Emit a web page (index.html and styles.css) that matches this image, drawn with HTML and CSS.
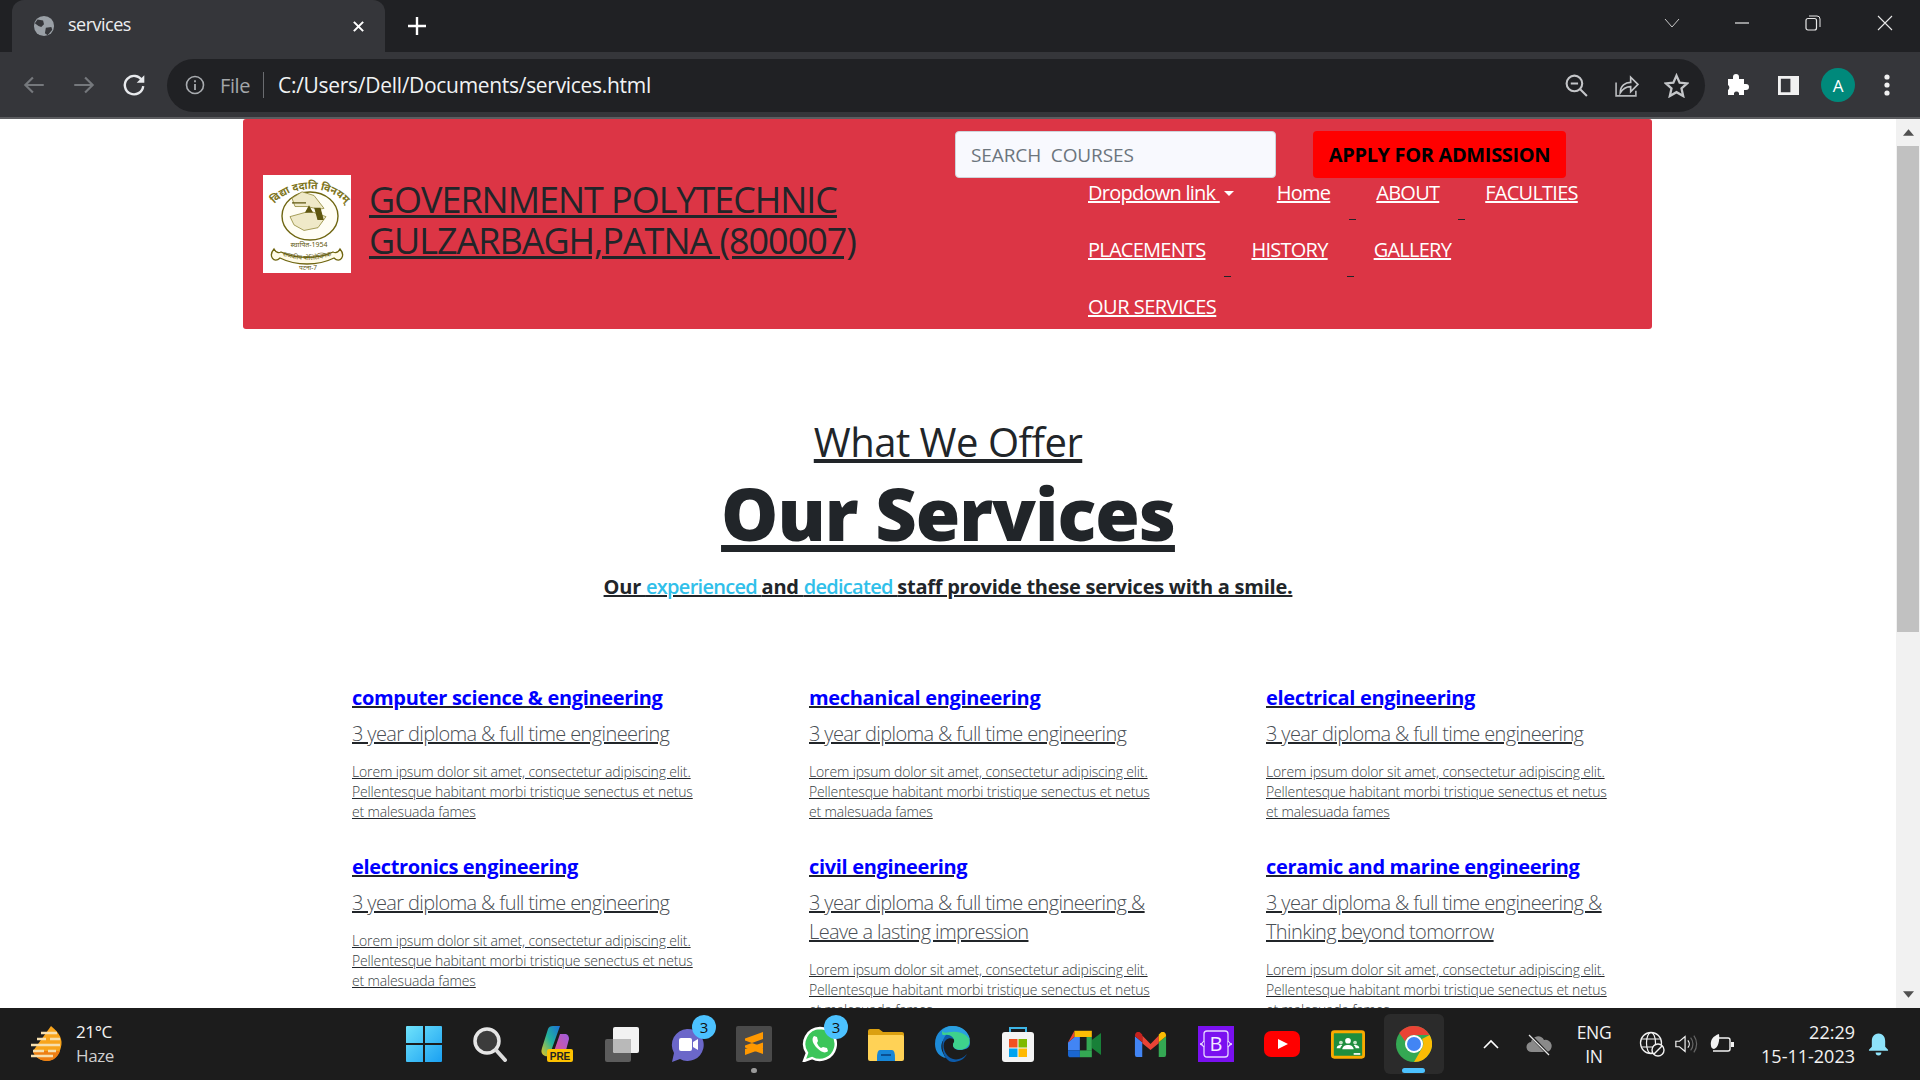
FILE: index.html
```html
<!DOCTYPE html>
<html lang="en">
<head>
<meta charset="utf-8">
<title>services</title>
<link rel="stylesheet" href="styles.css">
</head>
<body>
<div class="tabstrip">
  <div class="tab">
    <svg class="favicon" viewBox="0 0 24 24"><circle cx="12" cy="12" r="11" fill="#9aa0a6"/><path d="M5 5l6 1 1 4-3 3-3-1-4-3zM14 14l6-1 1 3-5 6-3-2z" fill="#35363a"/></svg>
    <span class="tab-title">services</span>
    <svg class="tab-x" viewBox="0 0 14 14"><path d="M2 2l10 10M12 2L2 12" stroke="#fff" stroke-width="2.2"/></svg>
  </div>
  <svg class="plus" viewBox="0 0 20 20"><path d="M10 1v18M1 10h18" stroke="#fff" stroke-width="2.4"/></svg>
  <div class="win-controls">
    <svg viewBox="0 0 16 16" class="wc wc-chev"><path d="M1 4l7 8 7-8" fill="none" stroke="#c8c8c8" stroke-width="1"/></svg>
    <svg viewBox="0 0 16 16" class="wc wc-min"><path d="M1 8h14" stroke="#e8e8e8" stroke-width="1.2"/></svg>
    <svg viewBox="0 0 16 16" class="wc wc-max"><rect x="1" y="3.5" width="10.5" height="11.5" rx="2" fill="none" stroke="#e8e8e8" stroke-width="1.2"/><path d="M4 1h8a3 3 0 0 1 3 3v8" fill="none" stroke="#e8e8e8" stroke-width="1"/></svg>
    <svg viewBox="0 0 16 16" class="wc wc-close"><path d="M1 1l14 14M15 1L1 15" stroke="#e8e8e8" stroke-width="1.1"/></svg>
  </div>
</div>
<div class="toolbar">
  <svg class="nav-ic nav-back" viewBox="0 0 24 24"><path d="M21 12H4M11 5l-7 7 7 7" fill="none" stroke="#75787c" stroke-width="2"/></svg>
  <svg class="nav-ic nav-fwd" viewBox="0 0 24 24"><path d="M3 12h17M13 5l7 7-7 7" fill="none" stroke="#75787c" stroke-width="2"/></svg>
  <svg class="nav-ic nav-rel" viewBox="0 0 24 24"><path d="M19.5 8A8.5 8.5 0 1 0 20.5 13" fill="none" stroke="#e8eaed" stroke-width="2.2"/><path d="M21.5 3v7h-7z" fill="#e8eaed"/></svg>
  <div class="omnibox">
    <svg class="info" viewBox="0 0 20 20"><circle cx="10" cy="10" r="8.5" fill="none" stroke="#a9acb0" stroke-width="1.6"/><path d="M10 9v6M10 5.2v2" stroke="#a9acb0" stroke-width="1.8"/></svg>
    <span class="file">File</span>
    <span class="sep"></span>
    <span class="url">C:/Users/Dell/Documents/services.html</span>
    <span class="omni-space"></span>
    <svg class="omni-ic" viewBox="0 0 24 24"><circle cx="10" cy="10" r="7.5" fill="none" stroke="#c4c6c9" stroke-width="2"/><path d="M6.5 10h7M15.5 15.5l6.5 6.5" stroke="#c4c6c9" stroke-width="2"/></svg>
    <svg class="omni-ic" viewBox="0 0 24 24"><path d="M2 9v13h19v-5" fill="none" stroke="#b4b6b9" stroke-width="1.6"/><path d="M6 19c0-7 5-10 10-10V4l7 7-7 7v-5c-4 0-7 1-10 6z" fill="none" stroke="#c4c6c9" stroke-width="1.6"/></svg>
    <svg class="omni-ic omni-star" viewBox="0 0 24 24"><path d="M12 2.5l3 6.8 7.2.7-5.4 4.9 1.6 7.2L12 18.4l-6.4 3.7 1.6-7.2L1.800 10l7.200-.7z" fill="none" stroke="#c4c6c9" stroke-width="2.200"/></svg>
  </div>
  <svg class="puzzle" viewBox="0 0 24 24"><path d="M3 7h5V5a3 3 0 0 1 6 0v2h5v5h2a3 3 0 0 1 0 6h-2v5h-5v-2a3 3 0 0 0-5 0v2H3v-5a3 3 0 0 0 0-5z" fill="#fff" transform="translate(0 -1) scale(.96)"/></svg>
  <svg class="sidepanel" viewBox="0 0 22 22"><path d="M0 1h22v20H0zM3 4v14h10V4z" fill="#f1f1f1" fill-rule="evenodd"/></svg>
  <div class="avatar">A</div>
  <svg class="kebab" viewBox="0 0 6 24"><circle cx="3" cy="4" r="2.600" fill="#f1f1f1"/><circle cx="3" cy="12" r="2.600" fill="#f1f1f1"/><circle cx="3" cy="20" r="2.600" fill="#f1f1f1"/></svg>
</div>

<div class="viewport">
  <main class="page">
    <header class="site-header">
      <svg class="logo" viewBox="0 0 88 98">
        <rect width="88" height="98" fill="#fff"/>
        <defs>
          <path id="logo-arc" d="M5 46A42 32 0 0 1 89 46"/>
          <path id="logo-rib" d="M15 79Q44 91 73 79"/>
        </defs>
        <text class="logo-motto"><textPath href="#logo-arc" startOffset="50%">विद्या ददाति विनयम्</textPath></text>
        <ellipse cx="47" cy="41" rx="28" ry="24" fill="#fffdf4" stroke="#6f6510" stroke-width="1.400"/>
        <g transform="translate(1 3) scale(1 .92)">
          <path d="M28 22l10-7 12 4 10 14-5 1-12-3-12 0zM26 42l20-6 16 6-8 12-14 3-10-6z" fill="#efe9c8" stroke="#8c8330" stroke-width=".8"/>
          <path d="M28 27h14M42 37l3-6 3 6zM54 45l-3-12 5 0 3 12z" fill="#5f5710" stroke="#5f5710" stroke-width="1.300"/>
        </g>
        <text x="46" y="72" class="logo-year">स्थापित-1954</text>
        <path d="M11 74c-6 7 0 15 6 9 16 8 38 8 54 0 6 6 12-2 6-9-2 4-5 4-7 3-14 7-38 7-52 0-2 1-5 1-7-3z" fill="#fffbe8" stroke="#6f6510" stroke-width="1.300"/>
        <text class="logo-rib"><textPath href="#logo-rib" startOffset="50%">राजकीय पोलिटेक्निक</textPath></text>
        <text x="45" y="95" class="logo-city">पटना-7</text>
      </svg>
      <h1 class="brand"><span>GOVERNMENT POLYTECHNIC</span><br><span>GULZARBAGH,PATNA (800007)</span></h1>
      <div class="header-right">
        <div class="search-row">
          <div class="search">SEARCH&nbsp; COURSES</div>
          <div class="apply">APPLY FOR ADMISSION</div>
        </div>
        <nav class="site-nav">
          <div class="nav-row">
            <a class="nav-link dropdown">Dropdown link <i class="caret"></i></a>
            <a class="nav-link dash">Home</a>
            <a class="nav-link dash">ABOUT</a>
            <a class="nav-link">FACULTIES</a>
          </div>
          <div class="nav-row">
            <a class="nav-link dash">PLACEMENTS</a>
            <a class="nav-link dash">HISTORY</a>
            <a class="nav-link">GALLERY</a>
          </div>
          <div class="nav-row">
            <a class="nav-link nav-link-wide">OUR SERVICES</a>
          </div>
        </nav>
      </div>
    </header>

    <section class="offer">
      <h2 class="offer-kicker">What We Offer</h2>
      <h1 class="offer-title">Our Services</h1>
      <p class="offer-lead">Our <span class="cyan">experienced </span>and <span class="cyan">dedicated </span>staff provide these services with a smile.</p>
    </section>

    <section class="courses">
      <article class="course">
        <h5 class="course-name">computer science &amp; engineering</h5>
        <p class="course-sub">3 year diploma &amp; full time engineering</p>
        <p class="course-text">Lorem ipsum dolor sit amet, consectetur adipiscing elit.<br>Pellentesque habitant morbi tristique senectus et netus<br>et malesuada fames</p>
      </article>
      <article class="course">
        <h5 class="course-name">mechanical engineering</h5>
        <p class="course-sub">3 year diploma &amp; full time engineering</p>
        <p class="course-text">Lorem ipsum dolor sit amet, consectetur adipiscing elit.<br>Pellentesque habitant morbi tristique senectus et netus<br>et malesuada fames</p>
      </article>
      <article class="course">
        <h5 class="course-name">electrical engineering</h5>
        <p class="course-sub">3 year diploma &amp; full time engineering</p>
        <p class="course-text">Lorem ipsum dolor sit amet, consectetur adipiscing elit.<br>Pellentesque habitant morbi tristique senectus et netus<br>et malesuada fames</p>
      </article>
      <article class="course">
        <h5 class="course-name">electronics engineering</h5>
        <p class="course-sub">3 year diploma &amp; full time engineering</p>
        <p class="course-text">Lorem ipsum dolor sit amet, consectetur adipiscing elit.<br>Pellentesque habitant morbi tristique senectus et netus<br>et malesuada fames</p>
      </article>
      <article class="course">
        <h5 class="course-name">civil engineering</h5>
        <p class="course-sub">3 year diploma &amp; full time engineering &amp;<br>Leave a lasting impression</p>
        <p class="course-text">Lorem ipsum dolor sit amet, consectetur adipiscing elit.<br>Pellentesque habitant morbi tristique senectus et netus<br>et malesuada fames</p>
      </article>
      <article class="course">
        <h5 class="course-name">ceramic and marine engineering</h5>
        <p class="course-sub">3 year diploma &amp; full time engineering &amp;<br>Thinking beyond tomorrow</p>
        <p class="course-text">Lorem ipsum dolor sit amet, consectetur adipiscing elit.<br>Pellentesque habitant morbi tristique senectus et netus<br>et malesuada fames</p>
      </article>
    </section>
  </main>
  <div class="scrollbar">
    <svg class="sb-arrow" viewBox="0 0 10 6"><path d="M5 0l5 6H0z" fill="#505050"/></svg>
    <div class="sb-track"><div class="sb-thumb"></div></div>
    <svg class="sb-arrow" viewBox="0 0 10 6"><path d="M5 6L0 0h10z" fill="#505050"/></svg>
  </div>
</div>

<footer class="taskbar">
  <div class="weather">
    <svg class="weather-ic" viewBox="0 0 36 36">
      <path d="M23 0c9 7 12 14 10 21-2 9-8 14-14 14S6 31 5 25z" fill="#f8a41c"/><path d="M5 25h27c-2 6-7 10-13 10S7 31 5 25z" fill="#ee7f14"/>
      <path d="M13 7h16M9 13h9M22 13h10M3 19h29M5 25h11M20 25h8M3 30h22" stroke="#f6dfae" stroke-width="2.400"/>
    </svg>
    <div class="weather-txt"><span class="temp">21°C</span><span class="cond">Haze</span></div>
  </div>
  <div class="apps">
    <div class="app"><svg viewBox="0 0 36 36" class="ic"><defs><linearGradient id="w1" x1="0" y1="0" x2="1" y2="1"><stop offset="0" stop-color="#6fe3fb"/><stop offset="1" stop-color="#1aa0f2"/></linearGradient></defs><path d="M0 1a1 1 0 0 1 1-1h16v17H0zM19 0h16a1 1 0 0 1 1 1v16H19zM0 19h17v17H1a1 1 0 0 1-1-1zM19 19h17v16a1 1 0 0 1-1 1H19z" fill="url(#w1)"/></svg></div>
    <div class="app"><svg viewBox="0 0 36 36" class="ic"><circle cx="15" cy="15" r="12" fill="#3c3c3c" stroke="#e6e6e6" stroke-width="3.500"/><path d="M24 24l9 10" stroke="#dcdcdc" stroke-width="4" stroke-linecap="round"/></svg></div>
    <div class="app"><svg viewBox="0 0 36 36" class="ic"><defs><linearGradient id="c1" x1="0" y1="1" x2="1" y2="0"><stop offset="0" stop-color="#e9c620"/><stop offset=".5" stop-color="#22b39c"/><stop offset="1" stop-color="#1b6fd8"/></linearGradient><linearGradient id="c2" x1="0" y1="1" x2="1" y2="0"><stop offset="0" stop-color="#e2558b"/><stop offset="1" stop-color="#9d5ce0"/></linearGradient></defs><path d="M4 22L10 3q1-3 5-3h7L12 28q-1 3-5 2-5-2-3-8z" fill="url(#c1)"/><path d="M22 8h6q3 1 3 5l-4 15H15z" fill="url(#c2)"/><rect x="9" y="23" width="26" height="13" rx="2" fill="#fdc100"/><text x="22" y="33.500" class="pre">PRE</text></svg></div>
    <div class="app"><svg viewBox="0 0 36 36" class="ic"><rect x="1" y="13" width="26" height="23" rx="2" fill="#5c5c5c"/><rect x="9" y="1" width="26" height="26" rx="2" fill="#f2f2f2"/><path d="M9 13h18v14H11a2 2 0 0 1-2-2z" fill="#b9b9b9"/></svg></div>
    <div class="app"><svg viewBox="0 0 36 36" class="ic"><path d="M17 3a16 16 0 1 1-7 30l-8 3 2-9A16 16 0 0 1 17 3z" fill="#6b67c9"/><rect x="9" y="12" width="13" height="13" rx="2" fill="#fff"/><path d="M23 16l5-3v11l-5-3z" fill="#fff"/></svg><span class="badge">3</span></div>
    <div class="app"><svg viewBox="0 0 36 36" class="ic"><rect width="36" height="36" rx="2" fill="#4a4a4a"/><path d="M27 6L9 12.500v7L27 13zM9 14.500L27 21v7L9 21.500zM27 22.500L9 29v-6l18-6.500z" fill="#ff9800"/></svg><i class="run-dot"></i></div>
    <div class="app"><svg viewBox="0 0 36 36" class="ic"><path d="M18 2a16 16 0 1 1-8 30l-8 3 3-8A16 16 0 0 1 18 2z" fill="#3bc55a" stroke="#fff" stroke-width="2.500"/><path d="M12 10c-3 3-1 8 3 12s8 6 11 3l-1-3-4-1-2 1c-2-1-3-3-4-5l1-2-1-4z" fill="#fff"/></svg><span class="badge">3</span></div>
    <div class="app"><svg viewBox="0 0 36 33" class="ic ic-h33"><path d="M0 3q0-2 2-2h9l4 3h19q2 0 2 2v4H0z" fill="#dba010"/><path d="M0 7h34q2 0 2 2v22q0 2-2 2H2q-2 0-2-2z" fill="#ffd256"/><path d="M9 30q0-8 3-8h12q3 0 3 8v3H9z" fill="#1787d8"/><path d="M13 27h10" stroke="#0a4f92" stroke-width="2"/></svg></div>
    <div class="app"><svg viewBox="0 0 36 36" class="ic"><path d="M1 18C1 7 9 0 18 0c10 0 18 7 18 17 0 5-5 7-10 7-4 0-7-2-7-5 0-2 2-3 2-5 0-3-4-5-8-3-6 3-7 10-4 16 1 2 2 4 3 5C6 31 1 26 1 18z" fill="#1d8bd8"/><path d="M12 9c3-3 9-2 11 2 1 2 0 3-1 4-2-3-7-4-10-1-4 3-3 12 3 17 5 4 13 3 18-3-3 6-9 8-14 8-10 0-14-20-7-27z" fill="#0d5aa8"/><path d="M8 5c6-6 20-6 26 4 2 4 2 8 0 11-2 3-8 5-12 3-3-1-4-4-2-7 1-3-3-8-9-7-2 0-3 1-3-4z" fill="#3ed18c"/><path d="M19 0c9 0 16 6 17 14-3-5-9-9-18-8-4 0-8 2-10-1 2-3 6-5 11-5z" fill="#2a9fe0"/></svg></div>
    <div class="app"><svg viewBox="0 0 36 36" class="ic"><path d="M10 7V2h16v5" fill="none" stroke="#3db5e6" stroke-width="2"/><rect x="2" y="6" width="32" height="30" rx="3" fill="#f4f4f4"/><rect x="9" y="13" width="8.500" height="8.500" fill="#f25022"/><rect x="18.500" y="13" width="8.500" height="8.500" fill="#7fba00"/><rect x="9" y="22.500" width="8.500" height="8.500" fill="#00a4ef"/><rect x="18.500" y="22.500" width="8.500" height="8.500" fill="#ffb900"/></svg></div>
    <div class="app"><svg viewBox="0 0 36 36" class="ic ic-meet" preserveAspectRatio="none"><path d="M7 9h6v17H0V16z" fill="#4285f4"/><path d="M0 16l7-7v-8z" fill="#ea4335"/><path d="M7 1h19v8H7z" fill="#fbbc04"/><path d="M0 26h13v9H3q-3 0-3-3z" fill="#1a66d0"/><path d="M13 26h13v9H13z" fill="#34a853"/><path d="M26 13l10-9v28l-10-9z" fill="#188038"/><path d="M20 9h6v17h-6z" fill="#34a853"/><rect x="13" y="9" width="7" height="17" fill="#1c1c1c"/></svg></div>
    <div class="app"><svg viewBox="0 0 36 29" class="ic ic-gmail" preserveAspectRatio="none"><path d="M1 5l8 7v17H3q-2 0-2-3z" fill="#4285f4"/><path d="M35 5l-8 7v17h6q2 0 2-3z" fill="#34a853"/><path d="M9 4l9 10 9-10v9l-9 8-9-8z" fill="#ea4335"/><path d="M1 5q0-6 5-5l3 3v9z" fill="#c5221f"/><path d="M35 5q0-6-5-5l-3 3v9z" fill="#fbbc04"/></svg></div>
    <div class="app"><svg viewBox="0 0 36 36" class="ic"><rect width="36" height="36" fill="#7a10f0"/><rect x="6" y="5" width="24" height="26" rx="3" fill="none" stroke="#e6d6ff" stroke-width="1.300"/><path d="M6 15q-2 3-4 3 2 0 4 3M30 15q2 3 4 3-2 0-4 3" fill="#7a10f0" stroke="#e6d6ff" stroke-width="1.300"/><text x="18" y="25" class="bs-b">B</text></svg></div>
    <div class="app"><svg viewBox="0 0 36 26" class="ic ic-yt"><rect width="36" height="26" rx="7" fill="#f00"/><path d="M14 8l10 5-10 5z" fill="#fff"/></svg></div>
    <div class="app"><svg viewBox="0 0 36 30" class="ic ic-class"><rect x="1.500" y="1.500" width="33" height="27" rx="2" fill="#1e8e3e" stroke="#f9ab00" stroke-width="3"/><circle cx="18" cy="11" r="3" fill="#fff"/><circle cx="10.500" cy="13" r="2" fill="#c8e6c9"/><circle cx="25.500" cy="13" r="2" fill="#c8e6c9"/><path d="M12 20c0-6 12-6 12 0zM6 19c0-3 4-4 6-3-2 1-2 2-2 3zM30 19c0-3-4-4-6-3 2 1 2 2 2 3z" fill="#fff"/><path d="M24 25h7" stroke="#fff" stroke-width="1.800"/></svg></div>
    <div class="app app-active"><svg viewBox="0 0 36 36" class="ic"><circle cx="18" cy="18" r="18" fill="#34a853"/><path d="M18 0a18 18 0 0 1 15.600 9H18a9 9 0 0 0-8.700 6.600L3.200 7A18 18 0 0 1 18 0z" fill="#ea4335"/><path d="M33.600 9A18 18 0 0 1 18 36l7.800-13.500A9 9 0 0 0 26 13z" fill="#fbbc04"/><circle cx="18" cy="18" r="9" fill="#fff"/><circle cx="18" cy="18" r="7" fill="#4285f4"/></svg><i class="active-pill"></i></div>
  </div>
  <div class="tray">
    <svg class="tray-chev" viewBox="0 0 16 10"><path d="M1 9l7-7 7 7" fill="none" stroke="#fff" stroke-width="1.600"/></svg>
    <svg class="tray-cloud" viewBox="0 0 26 24"><path d="M6 20a5 5 0 0 1-1-10 7 7 0 0 1 13-2 6 6 0 0 1 3 12z" fill="#8a8a8a"/><path d="M3 2l20 21" stroke="#1c1c1c" stroke-width="3"/><path d="M3 3l20 20" stroke="#e8e8e8" stroke-width="1.200"/></svg>
    <div class="lang"><span>ENG</span><span>IN</span></div>
    <svg class="tray-globe" viewBox="0 0 26 26"><circle cx="12" cy="12" r="10.500" fill="none" stroke="#f2f2f2" stroke-width="1.300"/><ellipse cx="12" cy="12" rx="4.500" ry="10.500" fill="none" stroke="#f2f2f2" stroke-width="1.200"/><path d="M2 8h20M2 16h20" stroke="#f2f2f2" stroke-width="1.200"/><circle cx="19" cy="19" r="6" fill="#1c1c1c" stroke="#f2f2f2" stroke-width="1.400"/><path d="M15 23l8-8" stroke="#f2f2f2" stroke-width="1.400"/></svg>
    <svg class="tray-vol" viewBox="0 0 26 22"><path d="M2 8h4l6-5v16l-6-5H2z" fill="none" stroke="#f2f2f2" stroke-width="1.300"/><path d="M15 7a6 6 0 0 1 0 8" fill="none" stroke="#f2f2f2" stroke-width="1.300"/><path d="M18 4a11 11 0 0 1 0 14M21.500 2a15 15 0 0 1 0 18" fill="none" stroke="#666" stroke-width="1.300"/></svg>
    <svg class="tray-batt" viewBox="0 0 26 22"><path d="M10 5h9q2 0 2 2v9q0 2-2 2H4" fill="none" stroke="#f2f2f2" stroke-width="1.400"/><path d="M22 9h3v5h-3z" fill="#f2f2f2"/><path d="M10 1C4 3 1 7 2 13c0 2 2 3 3 3 4-1 6-8 5-15z" fill="#f2f2f2"/></svg>
    <div class="clock"><span>22:29</span><span>15-11-2023</span></div>
    <svg class="tray-bell" viewBox="0 0 22 24"><path d="M11 1c-5 0-7 4-7 8v6l-3 3v1h20v-1l-3-3V9c0-4-2-8-7-8z" fill="#8ee3fa"/><path d="M8 21h6a3 3 0 0 1-6 0z" fill="#8ee3fa"/></svg>
  </div>
</footer>
</body>
</html>
```
FILE: styles.css
```css
* { box-sizing: border-box; }
html, body { margin: 0; padding: 0; height: 100%; }
body {
  width: 1920px; height: 1080px; overflow: hidden;
  display: flex; flex-direction: column;
  font-family: "Open Sans", "Liberation Sans", sans-serif;
  color: #212529; background: #fff;
}

/* Browser chrome */
.tabstrip { flex: 0 0 52px; background: #202124; display: flex; align-items: flex-start; padding-left: 12px; }
.tab { width: 373px; height: 52px; background: #35363a; border-radius: 12px 12px 0 0; display: flex; align-items: center; padding: 0 20px 0 21px; color: #e8eaed; }
.favicon { width: 22px; height: 22px; flex: none; }
.tab-title { margin-left: 13px; font-size: 18px; letter-spacing: -.5px; line-height: 46px; height: 50px; flex: 1; color: #eceef0; }
.tab-x { width: 13px; height: 13px; }
.plus { width: 20px; height: 20px; margin: 16px 0 0 22px; }
.win-controls { margin-left: auto; display: flex; align-items: center; height: 46px; }
.wc { width: 16px; height: 16px; }
.wc-chev { margin-right: 54px; }
.wc-min { margin-right: 55px; }
.wc-max { margin-right: 56px; }
.wc-close { margin-right: 27px; }

.toolbar { flex: 0 0 67px; background: #35363a; border-bottom: 2px solid #5c5d60; display: flex; align-items: center; padding-left: 21px; padding-top: 1px; }
.nav-ic { width: 26px; height: 26px; flex: none; }
.nav-fwd { margin-left: 24px; }
.nav-rel { margin-left: 24px; }
.omnibox { margin-left: 20px; width: 1538px; height: 53px; background: #202124; border-radius: 27px; display: flex; align-items: center; padding-left: 18px; padding-right: 16px; }
.info { width: 20px; height: 20px; flex: none; }
.file { margin-left: 15px; font-size: 20px; letter-spacing: -.4px; color: #a3a6a9; }
.sep { width: 1px; height: 26px; background: #6a6c70; margin: 0 14px 0 13px; }
.url { font-size: 21px; letter-spacing: -.3px; color: #f1f3f4; white-space: nowrap; }
.omni-space { flex: 1; }
.omni-ic { width: 25px; height: 25px; margin-left: 25px; flex: none; }
.puzzle { width: 25px; height: 25px; margin-left: 20px; flex: none; }
.sidepanel { width: 21px; height: 21px; margin-left: 28px; flex: none; }
.avatar { width: 34px; height: 34px; border-radius: 50%; background: #00897b; color: #fff; font-size: 17px; display: flex; align-items: center; justify-content: center; margin-left: 22px; flex: none; }
.kebab { width: 6px; height: 24px; margin-left: 29px; flex: none; }

/* Viewport */
.viewport { flex: 1; display: flex; min-height: 0; }
.page { flex: 1; min-width: 0; overflow: hidden; }
.scrollbar { flex: 0 0 24px; background: #f1f1f1; display: flex; flex-direction: column; align-items: center; }
.sb-arrow { width: 11px; height: 7px; flex: none; margin: 10px 0; }
.sb-track { flex: 1; width: 100%; padding: 0 1px; }
.sb-thumb { height: 486px; background: #c1c1c1; }

/* Site header */
.site-header { width: 1409px; height: 210px; margin: 0 0 0 243px; background: #dc3545; border-radius: 3px; display: flex; align-items: center; padding-left: 20px; }
.logo { width: 88px; height: 98px; flex: none; }
.logo-motto { font-family: "Noto Sans", sans-serif; font-size: 10.500px; font-weight: 700; text-anchor: middle; fill: #7d7420; }
.logo-rib { font-family: "Noto Sans", sans-serif; font-size: 6.500px; text-anchor: middle; fill: #5f5710; }
.logo-city { font-family: "Noto Sans", sans-serif; font-size: 6.500px; text-anchor: middle; fill: #5f5710; }
.logo-year { font-family: "Noto Sans", "Liberation Sans", sans-serif; font-size: 7px; text-anchor: middle; fill: #5f5710; }
.brand { margin: 0 0 8px 18px; font-size: 36px; font-weight: 400; line-height: 41px; letter-spacing: -1.05px; flex: 0 0 586px; white-space: nowrap; text-decoration: underline; color: #212529; }
.header-right { align-self: flex-start; padding-top: 12px; flex: 1; }
.search-row { display: flex; gap: 37px; height: 47px; }
.search { width: 321px; height: 47px; background: #f8f9fe; border: 1px solid #ced4da; border-radius: 4px; display: flex; align-items: center; padding-left: 15px; font-size: 19px; letter-spacing: -.1px; color: #6c757d; }
.apply { width: 253px; height: 47px; background: #f00; border-radius: 4px; display: flex; align-items: center; justify-content: center; font-size: 20px; font-weight: 700; letter-spacing: -.35px; color: #000; }
.site-nav { margin: -13px 0 0 133px; }
.nav-row { display: flex; gap: 46px; height: 57px; align-items: flex-start; padding-top: 14px; }
.nav-link { position: relative; display: block; color: #fff; font-size: 20px; line-height: 28px; letter-spacing: -.75px; white-space: nowrap; text-decoration: underline; }
.nav-link-wide { letter-spacing: -.5px; }
.dropdown { margin-right: -3px; }
.caret { display: inline-block; width: 0; height: 0; border: 5px solid transparent; border-top-color: #fff; border-bottom: 0; vertical-align: 4px; margin-left: 4px; }
.dash::after { content: ""; position: absolute; right: -26px; bottom: -13px; width: 7px; height: 1px; background: #212529; }

/* Offer */
.offer { text-align: center; margin-top: 89px; text-decoration: underline; }
.offer-kicker { margin: 0; font-size: 40px; font-weight: 400; line-height: 48px; letter-spacing: -.5px; }
.offer-title { margin: 4px 0 0; font-size: 72px; font-weight: 800; line-height: 86px; letter-spacing: -1px; }
.offer-lead { margin: 16px 0 0; font-size: 20px; font-weight: 700; line-height: 30px; letter-spacing: -.25px; }
.cyan { color: #31c0ea; font-weight: 600; letter-spacing: -.7px; }

/* Courses */
.courses { margin: 84px 0 0 352px; display: grid; grid-template-columns: repeat(3, 457px); align-items: start; text-decoration: underline; color: #212529; }
.course { height: 169px; }
.course-name { margin: 0; font-size: 20px; font-weight: 700; line-height: 24px; letter-spacing: -.33px; color: #00f; white-space: nowrap; }
.course-sub { margin: 9px 0 0; font-size: 20px; font-weight: 300; line-height: 29px; letter-spacing: -.62px; white-space: nowrap; color: #4a4f55; }
.course-text { margin: 14px 0 0; font-size: 14px; font-weight: 300; line-height: 20px; letter-spacing: -.15px; white-space: nowrap; color: #3a3f44; }

/* Taskbar */
.taskbar { flex: 0 0 72px; background: #1c1c1c; display: flex; align-items: center; color: #f2f2f2; }
.weather { flex: 0 0 391px; display: flex; align-items: center; padding-left: 28px; }
.weather-ic { width: 36px; height: 36px; flex: none; }
.weather-txt { margin-left: 12px; display: flex; flex-direction: column; font-size: 17px; line-height: 24px; letter-spacing: -.4px; }
.cond { color: #cfcfcf; }
.apps { display: flex; }
.app { width: 66px; height: 60px; display: flex; align-items: center; justify-content: center; position: relative; }
.ic { width: 36px; height: 36px; }
.ic-h33 { height: 33px; }
.ic-meet { width: 33px; height: 28px; }
.ic-gmail { width: 33px; height: 25px; }
.ic-yt { height: 26px; }
.ic-class { width: 34px; height: 29px; }
.badge { position: absolute; top: 1px; left: 37px; width: 24px; height: 24px; border-radius: 50%; background: #4cc2ff; color: #111; font-size: 15px; display: flex; align-items: center; justify-content: center; }
.run-dot { position: absolute; bottom: 1px; left: 30px; width: 6px; height: 5px; border-radius: 3px; background: #9a9a9a; }
.app-active { width: 60px; margin: 0 3px; background: #2b2b2b; border-radius: 6px; }
.active-pill { position: absolute; bottom: 1px; left: 18px; width: 23px; height: 5px; border-radius: 3px; background: #4cc2ff; }
.bs-b { font-family: "Open Sans", sans-serif; font-size: 20px; text-anchor: middle; fill: #f2e9ff; }
.pre { font-family: "Liberation Sans", sans-serif; font-size: 10px; font-weight: 700; text-anchor: middle; fill: #222; }

.tray { flex: 1; display: flex; align-items: center; padding-left: 36px; }
.tray-chev { width: 16px; height: 10px; flex: none; }
.tray-cloud { width: 26px; height: 24px; margin-left: 27px; flex: none; }
.lang { width: 40px; margin-left: 22px; display: flex; flex-direction: column; align-items: center; font-size: 17.500px; line-height: 24px; letter-spacing: -.3px; }
.tray-globe { width: 26px; height: 26px; margin-left: 25px; flex: none; }
.tray-vol { width: 24px; height: 22px; margin-left: 9px; flex: none; }
.tray-batt { width: 26px; height: 22px; margin-left: 11px; flex: none; }
.clock { margin-left: auto; display: flex; flex-direction: column; align-items: flex-end; font-size: 18px; line-height: 24px; letter-spacing: 0; }
.tray-bell { width: 21px; height: 24px; margin: 0 31px 0 13px; flex: none; }
```
